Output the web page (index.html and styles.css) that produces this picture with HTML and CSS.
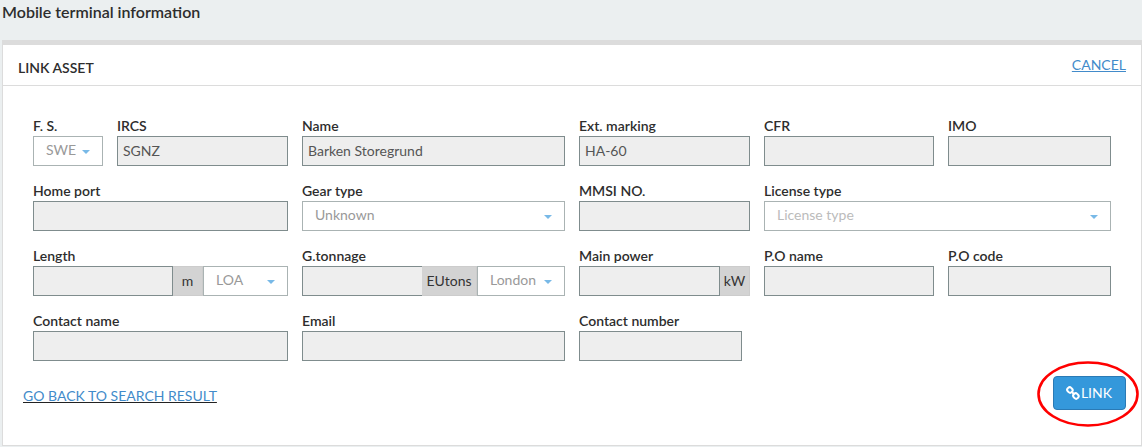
FILE: index.html
```html
<!DOCTYPE html>
<html lang="en">
<head>
<meta charset="utf-8">
<title>Mobile terminal information</title>
<link rel="stylesheet" href="styles.css">
</head>
<body>
<h1 class="page-title">Mobile terminal information</h1>
<main class="panel">
  <header class="panel-header">
    <h2 class="panel-title">LINK ASSET</h2>
    <a class="cancel" href="#">CANCEL</a>
  </header>
  <form>
    <div class="fields">
      <div class="pair">
        <div class="field flag">
          <label for="fs">F. S.</label>
          <span class="select"><select id="fs"><option>SWE</option></select></span>
        </div>
        <div class="field grow">
          <label for="ircs">IRCS</label>
          <input id="ircs" type="text" value="SGNZ" readonly>
        </div>
      </div>
      <div class="field">
        <label for="name">Name</label>
        <input id="name" type="text" value="Barken Storegrund" readonly>
      </div>
      <div class="field">
        <label for="marking">Ext. marking</label>
        <input id="marking" type="text" value="HA-60" readonly>
      </div>
      <div class="field">
        <label for="cfr">CFR</label>
        <input id="cfr" type="text" readonly>
      </div>
      <div class="field">
        <label for="imo">IMO</label>
        <input id="imo" type="text" readonly>
      </div>

      <div class="field">
        <label for="port">Home port</label>
        <input id="port" type="text" readonly>
      </div>
      <div class="field">
        <label for="gear">Gear type</label>
        <span class="select"><select id="gear"><option>Unknown</option></select></span>
      </div>
      <div class="field">
        <label for="mmsi">MMSI NO.</label>
        <input id="mmsi" type="text" readonly>
      </div>
      <div class="field wide">
        <label for="license">License type</label>
        <span class="select empty"><select id="license"><option>License type</option></select></span>
      </div>

      <div class="field">
        <label for="length">Length</label>
        <div class="group">
          <input id="length" type="text" readonly>
          <span class="unit">m</span>
          <span class="select length-type"><select aria-label="Length type"><option>LOA</option></select></span>
        </div>
      </div>
      <div class="field">
        <label for="tonnage">G.tonnage</label>
        <div class="group">
          <input id="tonnage" class="open" type="text" readonly>
          <span class="unit unit-long">EUtons</span>
          <span class="select tonnage-type"><select aria-label="Tonnage type"><option>London</option></select></span>
        </div>
      </div>
      <div class="field">
        <label for="power">Main power</label>
        <div class="group">
          <input id="power" type="text" readonly>
          <span class="unit">kW</span>
        </div>
      </div>
      <div class="field">
        <label for="poname">P.O name</label>
        <input id="poname" type="text" readonly>
      </div>
      <div class="field">
        <label for="pocode">P.O code</label>
        <input id="pocode" type="text" readonly>
      </div>

      <div class="field">
        <label for="contact">Contact name</label>
        <input id="contact" type="text" readonly>
      </div>
      <div class="field">
        <label for="email">Email</label>
        <input id="email" type="text" readonly>
      </div>
      <div class="field phone">
        <label for="phone">Contact number</label>
        <input id="phone" type="text" readonly>
      </div>
    </div>
    <footer class="panel-footer">
      <a class="back" href="#">GO BACK TO SEARCH RESULT</a>
      <div class="action">
        <button class="link-button" type="button">
          <svg class="icon" viewBox="0 0 14 14" aria-hidden="true"><g fill="none" stroke="#fff" stroke-width="2"><rect x="-2.7" y="-2.4" width="5.4" height="4.8" rx="2.1" transform="translate(3.9 4) rotate(45)"/><rect x="-2.7" y="-2.4" width="5.4" height="4.8" rx="2.1" transform="translate(9.9 10) rotate(45)"/><path d="M5.4 5.5l3 3"/></g></svg>
          <span>LINK</span>
        </button>
        <svg class="highlight" viewBox="0 0 102 66" preserveAspectRatio="none" aria-hidden="true"><ellipse cx="51" cy="33" rx="49.5" ry="31.5" fill="none" stroke="#f00" stroke-width="2.6"/></svg>
      </div>
    </footer>
  </form>
</main>
</body>
</html>
```
FILE: styles.css
```css
* { box-sizing: border-box; }

body {
  margin: 0;
  background: #ebeff0;
  color: #2d2d2d;
  font: 14px/20px Lato, "Liberation Sans", sans-serif;
}

.page-title {
  margin: 0;
  padding: 2px 2px 18px;
  font-size: 16px;
  font-weight: 600;
  line-height: 20px;
}

.panel {
  margin-left: 2px;
  background: #fff;
  border: 1px solid #dcdcdc;
  border-top-width: 5px;
}

.panel-header {
  display: flex;
  justify-content: space-between;
  padding: 10px 15px;
  border-bottom: 1px solid #dcdcdc;
}

.panel-title {
  margin: 0;
  padding-top: 6px;
  font-size: 14px;
  font-weight: 600;
  line-height: 14px;
}

.cancel { color: #428bca; }

.fields {
  display: grid;
  grid-template-columns: 255fr 263fr 171fr 170fr 163fr;
  gap: 15px 14px;
  padding: 30px 30px 15px;
}

.field { display: flex; flex-direction: column; min-width: 0; }
.pair { display: flex; gap: 14px; min-width: 0; }
.flag { flex: 0 0 70px; }
.grow { flex: 1; }
.wide { grid-column: span 2; }
.phone { padding-right: 8px; }

label { font-weight: 600; white-space: nowrap; }

input,
select {
  width: 100%;
  min-width: 0;
  height: 30px;
  margin: 0;
  border: 1px solid #7f8c8d;
  border-radius: 0;
  font: inherit;
}

input { padding: 0 5px 2px; background: #eee; color: #555; }

select {
  padding: 0 12px 2px;
  appearance: none;
  background: #fff;
  border-color: #aab3b3;
  color: #999;
}

.select { display: block; position: relative; }
.select::after {
  content: "";
  position: absolute;
  top: 14px;
  right: 13px;
  border: 4px solid transparent;
  border-top-color: #78b9e7;
  border-bottom: 0;
  pointer-events: none;
}
.empty select { color: #bbb; }

.group { display: flex; }
.group input { flex: 1; width: 0; }
.group .open { border-right: 0; }
.unit {
  flex: 0 0 30px;
  height: 30px;
  border: 1px solid #ccc;
  border-left: 0;
  background: #d3d3d3;
  color: #333;
  line-height: 28px;
  text-align: center;
}
.unit-long { flex-basis: 55px; }
.length-type { flex: 0 0 85px; }
.tonnage-type { flex: 0 0 88px; }

.panel-footer {
  display: flex;
  align-items: center;
  justify-content: space-between;
  padding: 0 15px 35px 20px;
}

.back { padding-top: 6px; color: #428bca; text-decoration-color: #222; }

.action { position: relative; }
.link-button {
  display: flex;
  align-items: center;
  gap: 1px;
  height: 34px;
  padding: 0 13px 0 12px;
  border: 1px solid #2a7ab5;
  border-radius: 4px;
  background: #3498db;
  color: #fff;
  font: inherit;
}
.icon { width: 14px; height: 14px; }

.highlight {
  position: absolute;
  top: -15px;
  left: -16px;
  width: 102px;
  height: 66px;
  pointer-events: none;
}
```
